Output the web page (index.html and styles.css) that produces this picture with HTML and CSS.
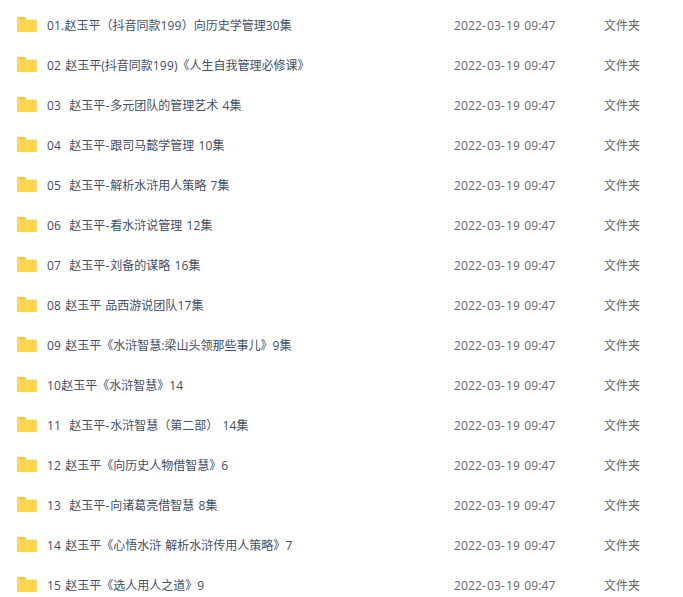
FILE: index.html
```html
<!DOCTYPE html>
<html lang="zh-CN">
<head>
<meta charset="utf-8">
<title>文件列表</title>
<link rel="stylesheet" href="styles.css">
</head>
<body>
<svg class="defs" width="0" height="0" aria-hidden="true"><defs>
<symbol id="folder" viewBox="0 0 20 15"><path d="M1.500 0H7c.8 0 1.300.3 1.800.9L10 2.400H0V1.500C0 .7.700 0 1.500 0Z" fill="#fec52e"/><path d="M0 3C0 2.300.5 1.700 1.200 1.700H8.600L10 2.600h8.600c.8 0 1.400.6 1.400 1.400v9.600c0 .8-.6 1.400-1.400 1.400H1.400C.6 15 0 14.400 0 13.600Z" fill="#ffd64f"/></symbol>
</defs></svg>
<ul class="list">
<li class="row"><svg class="icon"><use href="#folder"/></svg><span class="name"><b class="n">01.</b>赵玉平（抖音同款<b class="n">199</b>）向历史学管理<b class="n">30</b>集</span><span class="date">2022<b class="h">-</b>03<b class="h">-</b>19 09:47</span><span class="type">文件夹</span></li>
<li class="row"><svg class="icon"><use href="#folder"/></svg><span class="name"><b class="n">02</b> 赵玉平(抖音同款<b class="n">199</b>)《人生自我管理必修课》</span><span class="date">2022<b class="h">-</b>03<b class="h">-</b>19 09:47</span><span class="type">文件夹</span></li>
<li class="row"><svg class="icon"><use href="#folder"/></svg><span class="name"><b class="n">03</b>&nbsp; 赵玉平<b class="h">-</b>多元团队的管理艺术 <b class="n">4</b>集</span><span class="date">2022<b class="h">-</b>03<b class="h">-</b>19 09:47</span><span class="type">文件夹</span></li>
<li class="row"><svg class="icon"><use href="#folder"/></svg><span class="name"><b class="n">04</b>&nbsp; 赵玉平<b class="h">-</b>跟司马懿学管理 <b class="n">10</b>集</span><span class="date">2022<b class="h">-</b>03<b class="h">-</b>19 09:47</span><span class="type">文件夹</span></li>
<li class="row"><svg class="icon"><use href="#folder"/></svg><span class="name"><b class="n">05</b>&nbsp; 赵玉平<b class="h">-</b>解析水浒用人策略 <b class="n">7</b>集</span><span class="date">2022<b class="h">-</b>03<b class="h">-</b>19 09:47</span><span class="type">文件夹</span></li>
<li class="row"><svg class="icon"><use href="#folder"/></svg><span class="name"><b class="n">06</b>&nbsp; 赵玉平<b class="h">-</b>看水浒说管理 <b class="n">12</b>集</span><span class="date">2022<b class="h">-</b>03<b class="h">-</b>19 09:47</span><span class="type">文件夹</span></li>
<li class="row"><svg class="icon"><use href="#folder"/></svg><span class="name"><b class="n">07</b>&nbsp; 赵玉平<b class="h">-</b>刘备的谋略 <b class="n">16</b>集</span><span class="date">2022<b class="h">-</b>03<b class="h">-</b>19 09:47</span><span class="type">文件夹</span></li>
<li class="row"><svg class="icon"><use href="#folder"/></svg><span class="name"><b class="n">08</b> 赵玉平 品西游说团队<b class="n">17</b>集</span><span class="date">2022<b class="h">-</b>03<b class="h">-</b>19 09:47</span><span class="type">文件夹</span></li>
<li class="row"><svg class="icon"><use href="#folder"/></svg><span class="name"><b class="n">09</b> 赵玉平《水浒智慧:梁山头领那些事儿》<b class="n">9</b>集</span><span class="date">2022<b class="h">-</b>03<b class="h">-</b>19 09:47</span><span class="type">文件夹</span></li>
<li class="row"><svg class="icon"><use href="#folder"/></svg><span class="name"><b class="n">10</b>赵玉平《水浒智慧》<b class="n">14</b></span><span class="date">2022<b class="h">-</b>03<b class="h">-</b>19 09:47</span><span class="type">文件夹</span></li>
<li class="row"><svg class="icon"><use href="#folder"/></svg><span class="name"><b class="n">11</b>&nbsp; 赵玉平<b class="h">-</b>水浒智慧（第二部） <b class="n">14</b>集</span><span class="date">2022<b class="h">-</b>03<b class="h">-</b>19 09:47</span><span class="type">文件夹</span></li>
<li class="row"><svg class="icon"><use href="#folder"/></svg><span class="name"><b class="n">12</b> 赵玉平《向历史人物借智慧》<b class="n">6</b></span><span class="date">2022<b class="h">-</b>03<b class="h">-</b>19 09:47</span><span class="type">文件夹</span></li>
<li class="row"><svg class="icon"><use href="#folder"/></svg><span class="name"><b class="n">13</b>&nbsp; 赵玉平<b class="h">-</b>向诸葛亮借智慧 <b class="n">8</b>集</span><span class="date">2022<b class="h">-</b>03<b class="h">-</b>19 09:47</span><span class="type">文件夹</span></li>
<li class="row"><svg class="icon"><use href="#folder"/></svg><span class="name"><b class="n">14</b> 赵玉平《心悟水浒 解析水浒传用人策略》<b class="n">7</b></span><span class="date">2022<b class="h">-</b>03<b class="h">-</b>19 09:47</span><span class="type">文件夹</span></li>
<li class="row"><svg class="icon"><use href="#folder"/></svg><span class="name"><b class="n">15</b> 赵玉平《选人用人之道》<b class="n">9</b></span><span class="date">2022<b class="h">-</b>03<b class="h">-</b>19 09:47</span><span class="type">文件夹</span></li>
</ul>
</body>
</html>
```
FILE: styles.css
```css
html, body {
  margin: 0;
  padding: 0;
  background: #fff;
  overflow: hidden;
}
.defs {
  position: absolute;
}
.list {
  list-style: none;
  margin: 0;
  padding: 5px 0 0 17px;
  font-family: "Open Sans", "Noto Sans CJK SC", sans-serif;
  font-size: 12px;
  word-spacing: 1px;
}
.row {
  display: flex;
  align-items: center;
  height: 40px;
}
.icon {
  width: 20px;
  height: 15px;
  flex: none;
  margin-top: -1px;
}
.name {
  width: 407px;
  margin-left: 10px;
  color: #424e67;
  white-space: nowrap;
  flex: none;
}
.n {
  font-weight: 400;
  letter-spacing: 0.2px;
}
.h {
  font-weight: 400;
  letter-spacing: 1.1px;
}
.date {
  width: 150px;
  color: #666;
  flex: none;
  letter-spacing: 0.14px;
}
.type {
  color: #666;
  flex: none;
}
```
